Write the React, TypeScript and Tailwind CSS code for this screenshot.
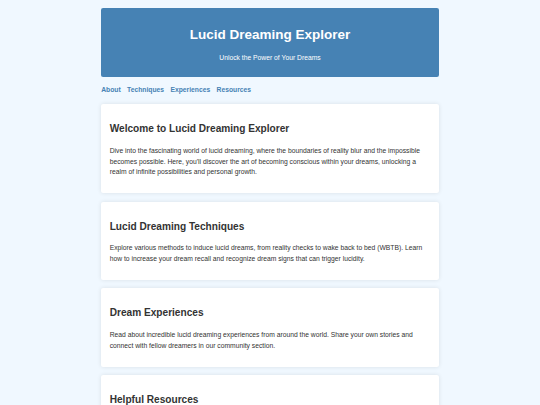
const sections = [
  {
    title: "Welcome to Lucid Dreaming Explorer",
    body: "Dive into the fascinating world of lucid dreaming, where the boundaries of reality blur and the impossible becomes possible. Here, you'll discover the art of becoming conscious within your dreams, unlocking a realm of infinite possibilities and personal growth.",
  },
  {
    title: "Lucid Dreaming Techniques",
    body: "Explore various methods to induce lucid dreams, from reality checks to wake back to bed (WBTB). Learn how to increase your dream recall and recognize dream signs that can trigger lucidity.",
  },
  {
    title: "Dream Experiences",
    body: "Read about incredible lucid dreaming experiences from around the world. Share your own stories and connect with fellow dreamers in our community section.",
  },
  {
    title: "Helpful Resources",
    body: "Discover books, articles, apps and tools that will support your lucid dreaming journey, from dream journals to guided meditations and expert advice.",
  },
];

const navLinks = ["About", "Techniques", "Experiences", "Resources"];

export default function App() {
  return (
    <div className="min-h-screen bg-[#f0f8ff] p-[8.44px] font-['Liberation_Sans',Arial,sans-serif] text-[#333]">
      <div className="mx-auto max-w-[337.5px]">
        <header className="rounded-[2.1px] bg-[#4682b4] pt-[15.4px] pb-[13.3px] text-center text-white">
          <h1 className="text-[13.5px] font-bold leading-[21.6px]">Lucid Dreaming Explorer</h1>
          <p className="mt-[7.2px] text-[6.75px] leading-[10.8px]">Unlock the Power of Your Dreams</p>
        </header>

        <nav className="my-[8.44px] text-[6.75px] font-bold leading-[10.8px]">
          {navLinks.map((link) => (
            <a key={link} href="#" className="mr-[6.33px] text-[#4682b4]">
              {link}
            </a>
          ))}
        </nav>

        {sections.map((s) => (
          <section
            key={s.title}
            className="mb-[8.44px] rounded-[2.1px] bg-white p-[8.44px] shadow-[0_0_4.2px_rgba(0,0,0,0.1)]"
          >
            <h2 className="my-[8.4px] text-[10.125px] font-bold leading-[16.2px]">{s.title}</h2>
            <p className="mb-[6.75px] text-[6.75px] leading-[10.8px]">{s.body}</p>
          </section>
        ))}
      </div>
    </div>
  );
}
